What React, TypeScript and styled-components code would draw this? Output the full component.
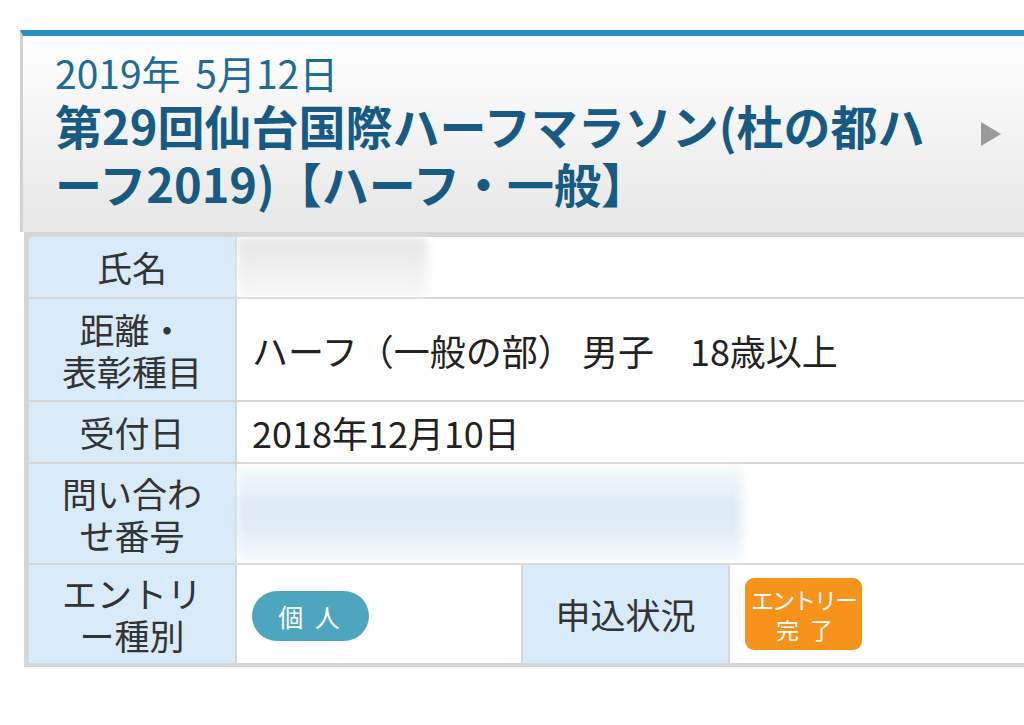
import styled, { createGlobalStyle } from 'styled-components';

const GlobalStyle = createGlobalStyle`
    html, body {
        margin: 0;
        padding: 0;
        background: #fff;
        overflow: hidden;
    }
    body {
        font-family: "Noto Sans CJK JP", "Noto Sans", sans-serif;
        color: #333;
    }
`;

function App(){
    return(
        <>
            <GlobalStyle />
            <Page>
                <RaceHeader>
                    <HeaderText>
                        <DateLine>2019年 5月12日</DateLine>
                        <RaceTitle>
                            第29回仙台国際ハーフマラソン(杜の都ハ<br />ーフ2019)【ハーフ・一般】
                        </RaceTitle>
                    </HeaderText>
                    <Arrow />
                </RaceHeader>
                <InfoTable>
                    <Label>氏名</Label>
                    <Value $span>
                        <Mask $w={190} $h={58} $tone="gray" />
                    </Value>

                    <Label>距離・<br />表彰種目</Label>
                    <Value $span>ハーフ（一般の部） 男子　18歳以上</Value>

                    <Label>受付日</Label>
                    <Value $span>2018年12月10日</Value>

                    <Label>問い合わ<br />せ番号</Label>
                    <Value $span>
                        <Mask $w={505} $h={92} $tone="blue" />
                    </Value>

                    <Label>エントリ<br />ー種別</Label>
                    <Value>
                        <Pill>個 人</Pill>
                    </Value>
                    <Label>申込状況</Label>
                    <Value>
                        <StatusBadge>エントリー<br />完 了</StatusBadge>
                    </Value>
                </InfoTable>
            </Page>
        </>
    )
}

const Page = styled.div`
    padding-top: 30px;
    padding-left: 20px;
    width: 1024px;
    box-sizing: border-box;
`;

const RaceHeader = styled.header`
    display: flex;
    align-items: center;
    margin-right: -10px;
    height: 196px;
    border-top: 6px solid #2b8fc4;
    border-left: 3px solid #d2d2d2;
    background: linear-gradient(#ffffff, #e7e7e7);
    box-sizing: content-box;
    padding: 0 0 0 32px;
`;

const HeaderText = styled.div`
    flex: 1;
    padding-bottom: 6px;
`;

const DateLine = styled.div`
    font-size: 39px;
    line-height: 44px;
    color: #1f6b96;
    word-spacing: 6px;
`;

const RaceTitle = styled.h1`
    margin: 2px 0 0;
    font-size: 47px;
    line-height: 58px;
    font-weight: bold;
    color: #175b84;
`;

const Arrow = styled.span`
    width: 0;
    height: 0;
    margin: 0 33px 0 0;
    border-top: 12px solid transparent;
    border-bottom: 12px solid transparent;
    border-left: 20px solid #9a9a9a;
`;

const InfoTable = styled.div`
    display: grid;
    grid-template-columns: 206px 284px 205px 1fr;
    grid-template-rows: 60px 101px 60px 99px 98px;
    gap: 2px;
    margin-left: 4px;
    margin-right: -10px;
    border: 5px solid #d6d6d6;
    border-bottom-width: 4px;
    background: #d6d6d6;
`;

const Label = styled.div`
    background: #d9eaf8;
    display: flex;
    align-items: center;
    justify-content: center;
    text-align: center;
    font-size: 35px;
    line-height: 42px;
    color: #333;
`;

const Value = styled.div<{ $span?: boolean }>`
    position: relative;
    background: #fff;
    display: flex;
    align-items: center;
    padding-left: 15px;
    font-size: 36px;
    color: #222;
    grid-column: ${p => (p.$span ? '2 / 5' : 'auto')};
`;

const Mask = styled.span<{ $w: number; $h: number; $tone: 'gray' | 'blue' }>`
    position: absolute;
    left: 0;
    top: 50%;
    transform: translateY(-50%);
    width: ${p => p.$w}px;
    height: ${p => p.$h}px;
    filter: blur(5px);
    background: ${p => p.$tone === 'gray'
        ? 'linear-gradient(180deg, #e6e6e6 0%, #eeeeee 45%, #f8f8f8 100%)'
        : 'linear-gradient(180deg, #f3f8fb 0%, #dcebf5 45%, #e2eef6 70%, #f7fafc 100%)'};
`;

const Pill = styled.span`
    display: inline-flex;
    align-items: center;
    justify-content: center;
    width: 117px;
    height: 50px;
    margin-top: 4px;
    border-radius: 25px;
    background: #4ea6be;
    color: #fff;
    font-size: 25px;
    letter-spacing: 3px;
`;

const StatusBadge = styled.span`
    display: inline-flex;
    align-items: center;
    justify-content: center;
    text-align: center;
    width: 117px;
    height: 72px;
    border-radius: 9px;
    background: #f7931a;
    color: #fff;
    font-size: 23px;
    line-height: 30px;
    letter-spacing: -2px;
    word-spacing: 10px;
`;

export default App;
